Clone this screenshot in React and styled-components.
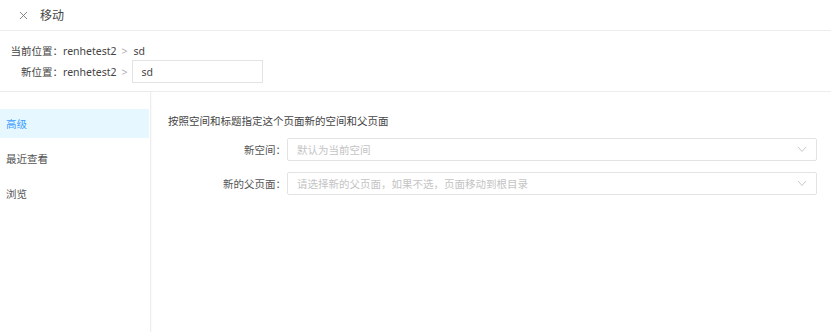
import React from "react";
import styled, { createGlobalStyle } from "styled-components";

const GlobalStyle = createGlobalStyle`
  html, body {
    margin: 0;
    padding: 0;
    background: #fff;
  }
  body {
    font-family: "Noto Sans", "Noto Sans CJK SC", sans-serif;
    font-size: 10.5px;
    color: #444;
  }
`;

const Page = styled.div`
  width: 831px;
  height: 332px;
  display: flex;
  flex-direction: column;
  overflow: hidden;
`;

const Header = styled.div`
  height: 31px;
  display: flex;
  align-items: center;
  padding-left: 20px;
  gap: 13px;
  border-bottom: 1px solid #ededed;
  box-sizing: border-box;
  font-size: 12px;
  color: #444;
`;

const CloseIcon = styled.svg`
  width: 7px;
  height: 7px;
  stroke: #777;
  stroke-width: 1;
`;

const Crumbs = styled.div`
  height: 61px;
  box-sizing: border-box;
  padding: 11px 0 0 10px;
  border-bottom: 1px solid #ededed;
`;

const CrumbRow = styled.div`
  display: flex;
  align-items: center;
  height: ${p => p.h}px;
`;

const CrumbLabel = styled.span`
  width: 53px;
  text-align: right;
  white-space: nowrap;
`;

const Sep = styled.span`
  color: #aaa;
  margin: 0 ${p => p.right || 6}px 0 5px;
`;

const NameInput = styled.div`
  width: 131px;
  height: 23px;
  box-sizing: border-box;
  border: 1px solid #e3e3e3;
  padding-left: 9px;
  display: flex;
  align-items: center;
`;

const Body = styled.div`
  flex: 1;
  display: flex;
`;

const Side = styled.div`
  width: 150px;
  border-right: 1px solid #eee;
  box-shadow: 1px 0 2px rgba(0, 0, 0, 0.03);
  padding-top: 17px;
  display: flex;
  flex-direction: column;
  gap: 6px;
`;

const SideItem = styled.div`
  height: 29px;
  display: flex;
  align-items: center;
  padding-left: 6px;
  margin-right: 1px;
  background: ${p => (p.active ? "#e6f7ff" : "transparent")};
  color: ${p => (p.active ? "#3a9dff" : "#555")};
`;

const Content = styled.div`
  flex: 1;
  padding: 21px 14px 0 17px;
`;

const Title = styled.div`
  height: 16px;
  line-height: 16px;
  margin-bottom: 9px;
`;

const FieldRow = styled.div`
  display: flex;
  align-items: center;
  margin-bottom: 11px;
`;

const FieldLabel = styled.div`
  width: 118px;
  text-align: right;
  padding-right: 1px;
  color: #555;
`;

const Select = styled.div`
  flex: 1;
  height: 23px;
  box-sizing: border-box;
  border: 1px solid #e3e3e3;
  border-radius: 2px;
  display: flex;
  align-items: center;
  justify-content: space-between;
  padding: 0 10px 0 9px;
  color: #c4c4c4;
`;

const Chevron = styled.svg`
  width: 8px;
  height: 5px;
  fill: none;
  stroke: #c8c8c8;
  stroke-width: 1;
`;

function App() {
  return (
    <>
      <GlobalStyle />
      <Page>
        <Header>
          <CloseIcon viewBox="0 0 8 8">
            <path d="M0 0L8 8M8 0L0 8" />
          </CloseIcon>
          <span>移动</span>
        </Header>
        <Crumbs>
          <CrumbRow h={17}>
            <CrumbLabel>当前位置：</CrumbLabel>
            <span>renhetest2</span>
            <Sep>&gt;</Sep>
            <span>sd</span>
          </CrumbRow>
          <CrumbRow h={25}>
            <CrumbLabel>新位置：</CrumbLabel>
            <span>renhetest2</span>
            <Sep right={4}>&gt;</Sep>
            <NameInput>sd</NameInput>
          </CrumbRow>
        </Crumbs>
        <Body>
          <Side>
            <SideItem active>高级</SideItem>
            <SideItem>最近查看</SideItem>
            <SideItem>浏览</SideItem>
          </Side>
          <Content>
            <Title>按照空间和标题指定这个页面新的空间和父页面</Title>
            <FieldRow>
              <FieldLabel>新空间：</FieldLabel>
              <Select>
                默认为当前空间
                <Chevron viewBox="0 0 8 5"><path d="M0 0L4 4.5L8 0" /></Chevron>
              </Select>
            </FieldRow>
            <FieldRow>
              <FieldLabel>新的父页面：</FieldLabel>
              <Select>
                请选择新的父页面，如果不选，页面移动到根目录
                <Chevron viewBox="0 0 8 5"><path d="M0 0L4 4.5L8 0" /></Chevron>
              </Select>
            </FieldRow>
          </Content>
        </Body>
      </Page>
    </>
  );
}

export default App;
